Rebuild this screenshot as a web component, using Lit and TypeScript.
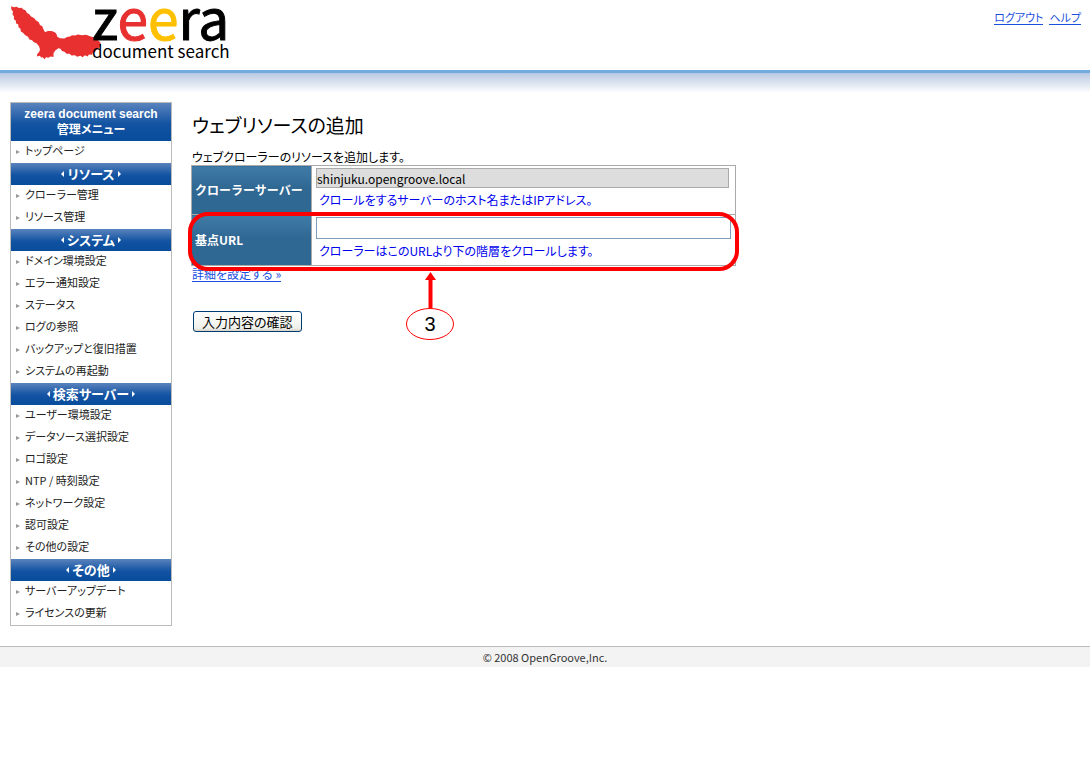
import { LitElement, html, css, svg } from "lit";
import { customElement, property } from "lit/decorators.js";

interface MenuSection {
  title: string;
  items: string[];
}

const TOP_ITEMS = ["トップページ"];

const SECTIONS: MenuSection[] = [
  { title: "リソース", items: ["クローラー管理", "リソース管理"] },
  {
    title: "システム",
    items: [
      "ドメイン環境設定",
      "エラー通知設定",
      "ステータス",
      "ログの参照",
      "バックアップと復旧措置",
      "システムの再起動",
    ],
  },
  {
    title: "検索サーバー",
    items: [
      "ユーザー環境設定",
      "データソース選択設定",
      "ロゴ設定",
      "NTP / 時刻設定",
      "ネットワーク設定",
      "認可設定",
      "その他の設定",
    ],
  },
  { title: "その他", items: ["サーバーアップデート", "ライセンスの更新"] },
];

@customElement("zeera-logo")
export class ZeeraLogo extends LitElement {
  static styles = css`
    :host {
      display: block;
      width: 240px;
      height: 64px;
    }
    .logo {
      display: block;
      overflow: visible;
    }
    .word {
      font: 400 55px "Noto Sans CJK JP", sans-serif;
      stroke: #000;
      stroke-width: 1;
    }
    .tagline {
      font: 400 17px "Noto Sans CJK JP", sans-serif;
    }
    .red {
      fill: #e83030;
    }
    .word .red {
      stroke: #e83030;
    }
    .yellow {
      fill: #ffc000;
      stroke: #ffc000;
    }
  `;

  render() {
    return html`
      <svg class="logo" width="240" height="64" viewBox="0 0 240 64" role="img" aria-label="zeera document search">
        ${svg`
          <path class="red" d="M11.2 6.2 L14 7.2 L16.5 6.7 L19 8 L21.5 7.8 L23.5 9.5 L25.5 10.3 L27 13 L29.3 14.2 L31 16.5 L34 18 L36 20.5 L38.6 22 L40 25 L42.3 26.3 L43.3 29 L45 32.3 C47 31 50 30.7 53 31.5 C55.5 32.2 57 34 57.3 36.8 L60 38.2 L64.5 38.5 L67 37 L70 36.6 L72 35.2 L75 35.5 L78 34.5 L82 35.2 L86 34.8 L90 36.2 L94 37.5 L97 39.5 L100 42 L101 44.5 L99.7 46.2 L98.5 48.5 L96.3 50 L95 52 L92.8 52.5 L92 54.8 L89 54.5 L87.5 56.5 L85 55.3 L82.5 57.2 L80.5 55.8 L77 56.8 L75 55.2 L71.5 55.5 L69.5 53.8 L66.5 53.8 L64.5 51.8 L62 51 L60.5 48.8 L58.3 48.3 L55.3 50.5 L53.5 53.2 L53.5 57 L50.5 56.4 L48.3 57.8 L46 57.2 L44.5 59.2 L42.7 57.2 L41 57.6 L40 55.8 L36.8 56.5 L37.4 53.8 L39.2 52 L40 49.5 L39 46.3 L36.5 43.3 L34 42.2 L32 40.2 L29.5 39.4 L28 36.8 L25 35 L23 32.7 L20.8 31.5 L20.5 28.8 L18.5 27.3 L18.3 24.6 L16 23.2 L15.9 20.8 L13.9 19.2 L14 16.5 L12.5 14.3 L13 11.5 L11.3 9.5 Z"/>
          <text class="word" x="92" y="40">z<tspan class="red">e</tspan><tspan class="yellow">e</tspan>ra</text>
          <text class="tagline" x="92" y="58">document search</text>
        `}
      </svg>
    `;
  }
}

@customElement("side-menu")
export class SideMenu extends LitElement {
  @property({ attribute: false }) sections: MenuSection[] = [];

  static styles = css`
    :host {
      display: block;
    }
    .menu {
      border: 1px solid #bbb;
      background: #fff;
    }
    .head,
    .section {
      margin: 0;
      color: #fff;
      font-weight: 700;
      text-align: center;
      background: linear-gradient(#5a83bd, #1253a2 55%, #084c9c);
    }
    .head {
      padding: 3px 0;
      font-size: 12px;
      line-height: 16px;
      font-family: "Liberation Sans", "Noto Sans CJK JP", sans-serif;
    }
    .section {
      display: flex;
      align-items: center;
      justify-content: center;
      gap: 3px;
      font-size: 13px;
      line-height: 22px;
    }
    .section::before,
    .section::after {
      content: "";
      border: 3px solid transparent;
    }
    .section::before {
      border-left-width: 0;
      border-right-color: #fff;
    }
    .section::after {
      border-right-width: 0;
      border-left-color: #fff;
    }
    .list {
      margin: 0;
      padding: 0;
      list-style: none;
    }
    .link {
      display: flex;
      align-items: center;
      gap: 5px;
      padding: 0 0 4px 5px;
      font-size: 11px;
      line-height: 18px;
      color: #222;
      text-decoration: none;
    }
    .link::before {
      content: "";
      margin-top: 4px;
      border: 2px solid transparent;
      border-left: 4px solid #999;
      border-right: 0;
    }
  `;

  private list(items: string[]) {
    return html`<ul class="list">
      ${items.map((item) => html`<li><a class="link" href="#">${item}</a></li>`)}
    </ul>`;
  }

  render() {
    return html`
      <nav class="menu">
        <h2 class="head">zeera document search<br />管理メニュー</h2>
        ${this.list(TOP_ITEMS)}
        ${this.sections.map(
          (s) => html`<h3 class="section">${s.title}</h3>
            ${this.list(s.items)}`
        )}
      </nav>
    `;
  }
}

@customElement("app-root")
export class AppRoot extends LitElement {
  static styles = css`
    :host {
      display: block;
      color: #000;
      background: #fff;
      font-family: "Noto Sans CJK JP", sans-serif;
      font-feature-settings: "palt";
      font-size: 12px;
      line-height: 16px;
    }
    .header {
      display: flex;
      justify-content: space-between;
      height: 70px;
      border-bottom: 3px solid #73abe0;
    }
    .band {
      height: 20px;
      background: linear-gradient(#b8c8e2, #fff);
    }
    .tools {
      display: flex;
      gap: 6px;
      padding: 10px 9px 0 0;
      font-size: 11px;
      line-height: 14px;
    }
    .anchor {
      color: #1a4fe0;
      text-decoration: none;
      border-bottom: 1px solid #1a4fe0;
    }
    .tools .anchor {
      height: 14px;
    }
    .body {
      display: grid;
      grid-template-columns: 162px minmax(0, 1fr);
      gap: 19px;
      padding: 9px 10px 20px;
    }
    .title {
      margin: 10px 1px 0;
      font-size: 19px;
      font-weight: 400;
      line-height: 26px;
    }
    .intro {
      margin: 11px 1px 0;
    }
    .form-area {
      position: relative;
      max-width: 545px;
    }
    .grid {
      width: 100%;
      border-collapse: collapse;
    }
    .name,
    .value {
      border: 1px solid #aaa;
      vertical-align: middle;
    }
    .name {
      width: 120px;
      box-sizing: border-box;
      padding: 0 3px;
      color: #fff;
      font-size: 12px;
      font-feature-settings: normal;
      text-align: left;
      background: linear-gradient(#3f7ba6, #306894 45%);
    }
    .value {
      padding: 2px 4px 6px;
    }
    .text {
      display: block;
      box-sizing: border-box;
      width: 100%;
      height: 22px;
      padding: 0;
      border: 1px solid #7f9db9;
      background: #fff;
      color: #000;
      font: 12px "Noto Sans CJK JP", sans-serif;
    }
    .text.fixed {
      width: calc(100% - 2px);
      height: 20px;
      border-color: #aaa;
      background: #ddd;
    }
    .hint {
      margin: 4px 3px 0;
      color: #00e;
    }
    .mark {
      position: absolute;
      box-sizing: border-box;
      left: -3px;
      right: -3px;
      bottom: -5px;
      height: 59px;
      border: 4px solid #f00;
      border-radius: 20px;
      pointer-events: none;
    }
    .callout {
      position: absolute;
      left: 215px;
      top: 100%;
      margin-top: 5px;
    }
    .digit {
      font: 20px "Liberation Sans", sans-serif;
    }
    .detail {
      display: inline-block;
      margin: 0 1px;
      font-size: 12px;
      line-height: 15px;
    }
    .submit {
      display: block;
      height: 21px;
      margin: 29px 2px 0;
      padding: 0 8px;
      border: 1px solid #003c74;
      border-radius: 3px;
      background: linear-gradient(#fff, #f0f0ea 85%, #d6d0c5);
      color: #000;
      font: 13px/17px "Noto Sans CJK JP", sans-serif;
      font-feature-settings: "palt";
    }
    .footer {
      border-top: 1px solid #bbb;
      background: #f3f3f3;
      color: #333;
      font-size: 11px;
      line-height: 20px;
      text-align: center;
    }
  `;

  render() {
    return html`
      <header class="header">
        <zeera-logo></zeera-logo>
        <div class="tools">
          <a class="anchor" href="#">ログアウト</a>
          <a class="anchor" href="#">ヘルプ</a>
        </div>
      </header>
      <div class="band"></div>
      <div class="body">
        <side-menu .sections=${SECTIONS}></side-menu>
        <main>
          <h1 class="title">ウェブリソースの追加</h1>
          <p class="intro">ウェブクローラーのリソースを追加します。</p>
          <div class="form-area">
            <table class="grid">
              <tr>
                <th class="name" scope="row"><label for="server">クローラーサーバー</label></th>
                <td class="value">
                  <input id="server" class="text fixed" type="text" readonly value="shinjuku.opengroove.local" />
                  <p class="hint">クロールをするサーバーのホスト名またはIPアドレス。</p>
                </td>
              </tr>
              <tr>
                <th class="name" scope="row"><label for="base">基点URL</label></th>
                <td class="value">
                  <input id="base" class="text" type="text" />
                  <p class="hint">クローラーはこのURLより下の階層をクロールします。</p>
                </td>
              </tr>
            </table>
            <div class="mark"></div>
            <svg class="callout" width="50" height="70" viewBox="0 0 50 70">
              <path d="M24.5 8V37" stroke="#f00" stroke-width="4" />
              <path d="M24.5 1L30 9H19Z" fill="#f00" />
              <ellipse cx="24" cy="53" rx="23.5" ry="15.5" fill="#fff" stroke="#f00" />
              <text class="digit" x="24" y="60" text-anchor="middle">3</text>
            </svg>
          </div>
          <a class="anchor detail" href="#">詳細を設定する »</a>
          <button class="submit" type="button">入力内容の確認</button>
        </main>
      </div>
      <footer class="footer">© 2008 OpenGroove,Inc.</footer>
    `;
  }
}
